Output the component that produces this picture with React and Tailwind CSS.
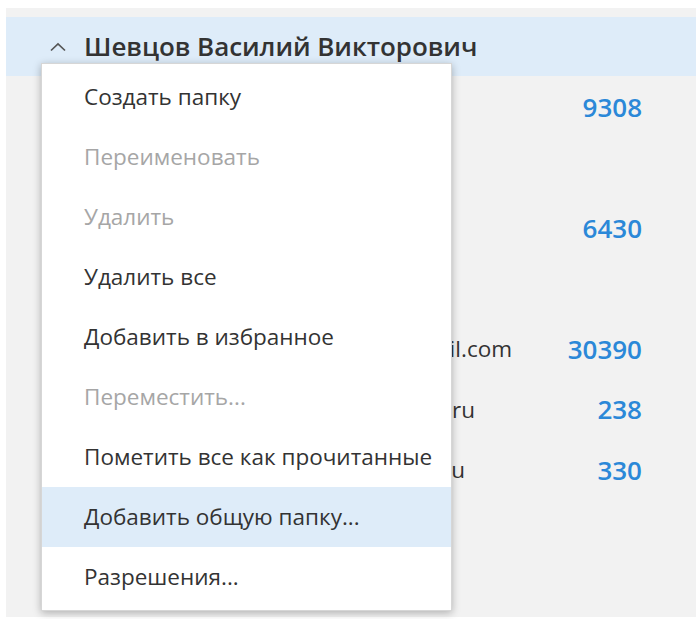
import React from "react";

const folders = [
  { name: "Входящие", count: "9308" },
  { name: "Черновики", count: "" },
  { name: "Отправленные", count: "6430" },
  { name: "Удаленные", count: "" },
  { name: "vasilii.shevtsov.moscow@hotmail.com", count: "30390" },
  { name: "vasiliy.shevtsov.office1@yandex.ru", count: "238" },
  { name: "vasiliy.shevtsov.home@yandex.ru", count: "330" },
];

const menuItems = [
  { label: "Создать папку" },
  { label: "Переименовать", disabled: true },
  { label: "Удалить", disabled: true },
  { label: "Удалить все" },
  { label: "Добавить в избранное" },
  { label: "Переместить...", disabled: true },
  { label: "Пометить все как прочитанные" },
  { label: "Добавить общую папку...", active: true },
  { label: "Разрешения..." },
];

const ChevronUp = () => (
  <svg width="18" height="14" viewBox="0 0 18 14" className="text-[#555]">
    <path d="M2 10.5 L9 4 L16 10.5" fill="none" stroke="currentColor" strokeWidth="1.7" />
  </svg>
);

export default function App() {
  return (
    <div
      className="relative w-[696px] h-[619px] bg-white pt-[8px] pl-[6px] overflow-hidden"
      style={{ fontFamily: '"Open Sans", "Noto Sans", sans-serif' }}
    >
      <div className="h-[609px] bg-[#f2f2f2] pt-[9px]">
        {/* account header */}
        <div className="h-[59px] bg-[#deecf9] flex items-center pl-[43px]">
          <ChevronUp />
          <span className="ml-[17px] text-[26px] font-semibold text-[#333] tracking-[-0.05px]">
            Шевцов Василий Викторович
          </span>
        </div>

        {/* folder list */}
        <div className="pt-[1px]">
          {folders.map((f) => (
            <div key={f.name} className="h-[60.5px] flex items-center pl-[107px] pr-[54px]">
              <span className="flex-1 text-[22.5px] text-[#333] whitespace-nowrap overflow-hidden">
                {f.name}
              </span>
              <span className="text-[26px] font-semibold text-[#2b88d8]">{f.count}</span>
            </div>
          ))}
        </div>
      </div>

      {/* context menu */}
      <div className="absolute left-[41px] top-[63px] w-[411px] bg-white border border-[#d6d6d6] shadow-[0_2px_8px_rgba(0,0,0,0.28)] py-[3px]">
        {menuItems.map((item) => (
          <div
            key={item.label}
            className={`h-[60px] flex items-center pl-[42px] text-[22.5px] ${
              item.active ? "bg-[#deecf9]" : ""
            } ${item.disabled ? "text-[#a6a6a6]" : "text-[#333]"}`}
          >
            {item.label}
          </div>
        ))}
      </div>
    </div>
  );
}
